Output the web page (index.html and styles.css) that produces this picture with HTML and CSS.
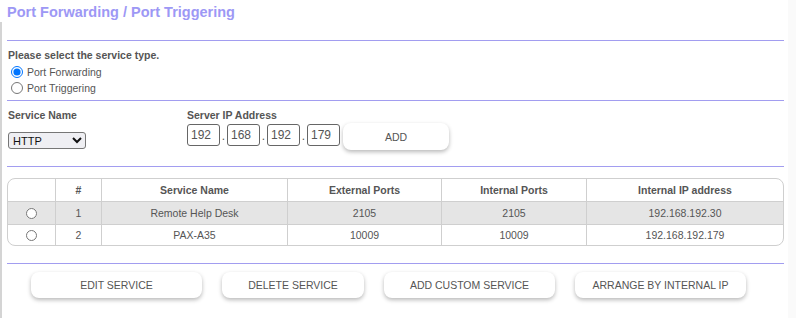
FILE: index.html
```html
<!DOCTYPE html>
<html lang="en">
<head>
    <meta charset="UTF-8">
    <title>Port Forwarding / Port Triggering</title>
    <link rel="stylesheet" href="styles.css">
</head>
<body>
<div class="page">
    <div class="main">
        <h1 class="title">Port Forwarding / Port Triggering</h1>
        <div class="content">
            <div class="rule"></div>

            <div class="type-box">
                <p class="label">Please select the service type.</p>
                <label class="radio-row"><input type="radio" name="type" checked> Port Forwarding</label>
                <label class="radio-row"><input type="radio" name="type"> Port Triggering</label>
            </div>

            <div class="rule"></div>

            <div class="service-box">
                <div class="service-col">
                    <p class="label">Service Name</p>
                    <select class="service-select">
                        <option>HTTP</option>
                    </select>
                </div>
                <div class="ip-col">
                    <p class="label">Server IP Address</p>
                    <div class="ip-row">
                        <input class="ip-part" type="text" value="192">
                        <span class="dot">.</span>
                        <input class="ip-part" type="text" value="168">
                        <span class="dot">.</span>
                        <input class="ip-part" type="text" value="192">
                        <span class="dot">.</span>
                        <input class="ip-part" type="text" value="179">
                        <button class="btn btn-add">ADD</button>
                    </div>
                </div>
            </div>

            <div class="rule"></div>

            <table class="service-table">
                <thead>
                    <tr>
                        <th class="col-radio"></th>
                        <th class="col-num">#</th>
                        <th class="col-name">Service Name</th>
                        <th class="col-ext">External Ports</th>
                        <th class="col-int">Internal Ports</th>
                        <th class="col-ip">Internal IP address</th>
                    </tr>
                </thead>
                <tbody>
                    <tr class="shaded">
                        <td><input type="radio" name="row"></td>
                        <td>1</td>
                        <td>Remote Help Desk</td>
                        <td>2105</td>
                        <td>2105</td>
                        <td>192.168.192.30</td>
                    </tr>
                    <tr>
                        <td><input type="radio" name="row"></td>
                        <td>2</td>
                        <td>PAX-A35</td>
                        <td>10009</td>
                        <td>10009</td>
                        <td>192.168.192.179</td>
                    </tr>
                </tbody>
            </table>

            <div class="rule rule-bottom"></div>

            <div class="actions">
                <button class="btn btn-wide">EDIT SERVICE</button>
                <button class="btn btn-mid">DELETE SERVICE</button>
                <button class="btn btn-wide">ADD CUSTOM SERVICE</button>
                <button class="btn btn-wide">ARRANGE BY INTERNAL IP</button>
            </div>
        </div>
    </div>
    <div class="side"></div>
</div>
</body>
</html>
```

FILE: styles.css
```css
body {
    margin: 0;
    padding: 0;
    font-family: "Liberation Sans", Arial, sans-serif;
    font-size: 10.5px;
    color: #555;
    background-color: white;
}
.page {
    display: flex;
    height: 318px;
}
.main {
    width: 788px;
}
.side {
    flex: 1;
    background-color: #fafafa;
}
.title {
    margin: 0;
    height: 22px;
    padding: 4px 0 0 7px;
    box-sizing: border-box;
    font-size: 14.5px;
    line-height: 17px;
    font-weight: bold;
    color: #9d98f5;
}
.content {
    border-left: 2px solid #d4d4d4;
    padding: 18px 4px 0 5px;
    height: 296px;
    box-sizing: border-box;
}
.rule {
    height: 1px;
    background-color: #a29df0;
}
.label {
    margin: 0;
    font-weight: bold;
    line-height: 13px;
}
.type-box {
    padding: 8px 0 0 1px;
    height: 59px;
    box-sizing: border-box;
}
.radio-row {
    display: flex;
    align-items: center;
    height: 16px;
    line-height: 16px;
}
.radio-row input {
    width: 12px;
    height: 12px;
    margin: 0 4px 0 3px;
}
.type-box .label {
    margin-bottom: 2px;
}
.service-box {
    display: flex;
    height: 65px;
    padding-top: 8px;
    box-sizing: border-box;
}
.service-col {
    width: 179px;
    padding-left: 1px;
}
.service-select {
    margin-top: 10px;
    width: 78px;
    height: 17px;
    font-family: "Liberation Sans", Arial, sans-serif;
    font-size: 11px;
    color: #111;
    border: 1px solid #767676;
    border-radius: 3px;
    padding: 0;
    background-color: #efeff3;
}
.ip-row {
    display: flex;
    align-items: flex-start;
    margin-top: 1px;
}
.ip-part {
    width: 33px;
    height: 22px;
    box-sizing: border-box;
    border: 1px solid #666;
    border-radius: 3px;
    padding: 0 3px;
    margin-top: 1px;
    font-family: "Liberation Sans", Arial, sans-serif;
    font-size: 12px;
    color: #555;
}
.dot {
    width: 7px;
    text-align: center;
    line-height: 22px;
    padding-top: 2px;
    font-size: 12px;
}
.btn {
    font-family: "Liberation Sans", Arial, sans-serif;
    font-size: 10.5px;
    color: #555;
    background-color: white;
    border: none;
    border-radius: 8px;
    box-shadow: 0 2px 4px rgba(0, 0, 0, 0.28);
    cursor: pointer;
}
.btn-add {
    width: 106px;
    height: 27px;
    margin-left: 3px;
}
.service-table {
    margin-top: 11px;
    width: 777px;
    border-collapse: separate;
    border-spacing: 0;
    border: 1px solid #cfcfcf;
    border-radius: 8px;
    overflow: hidden;
    text-align: center;
}
.service-table th,
.service-table td {
    height: 22px;
    padding: 0;
    border-right: 1px solid #cfcfcf;
    border-bottom: 1px solid #cfcfcf;
}
.service-table th {
    font-weight: bold;
}
.service-table th:last-child,
.service-table td:last-child {
    border-right: none;
}
.service-table tbody tr:last-child td {
    border-bottom: none;
    height: 20px;
}
.service-table td input {
    width: 11px;
    height: 11px;
    margin: 2px 0 0 0;
}
.shaded td {
    background-color: #e5e5e5;
}
.col-radio { width: 47px; }
.col-num { width: 45px; }
.col-name { width: 185px; }
.col-ext { width: 153px; }
.col-int { width: 144px; }
.rule-bottom {
    margin-top: 17px;
}
.actions {
    display: flex;
    gap: 20px;
    padding: 8px 0 0 24px;
}
.btn-wide {
    width: 171px;
    height: 26px;
}
.btn-mid {
    width: 142px;
    height: 26px;
}
```
